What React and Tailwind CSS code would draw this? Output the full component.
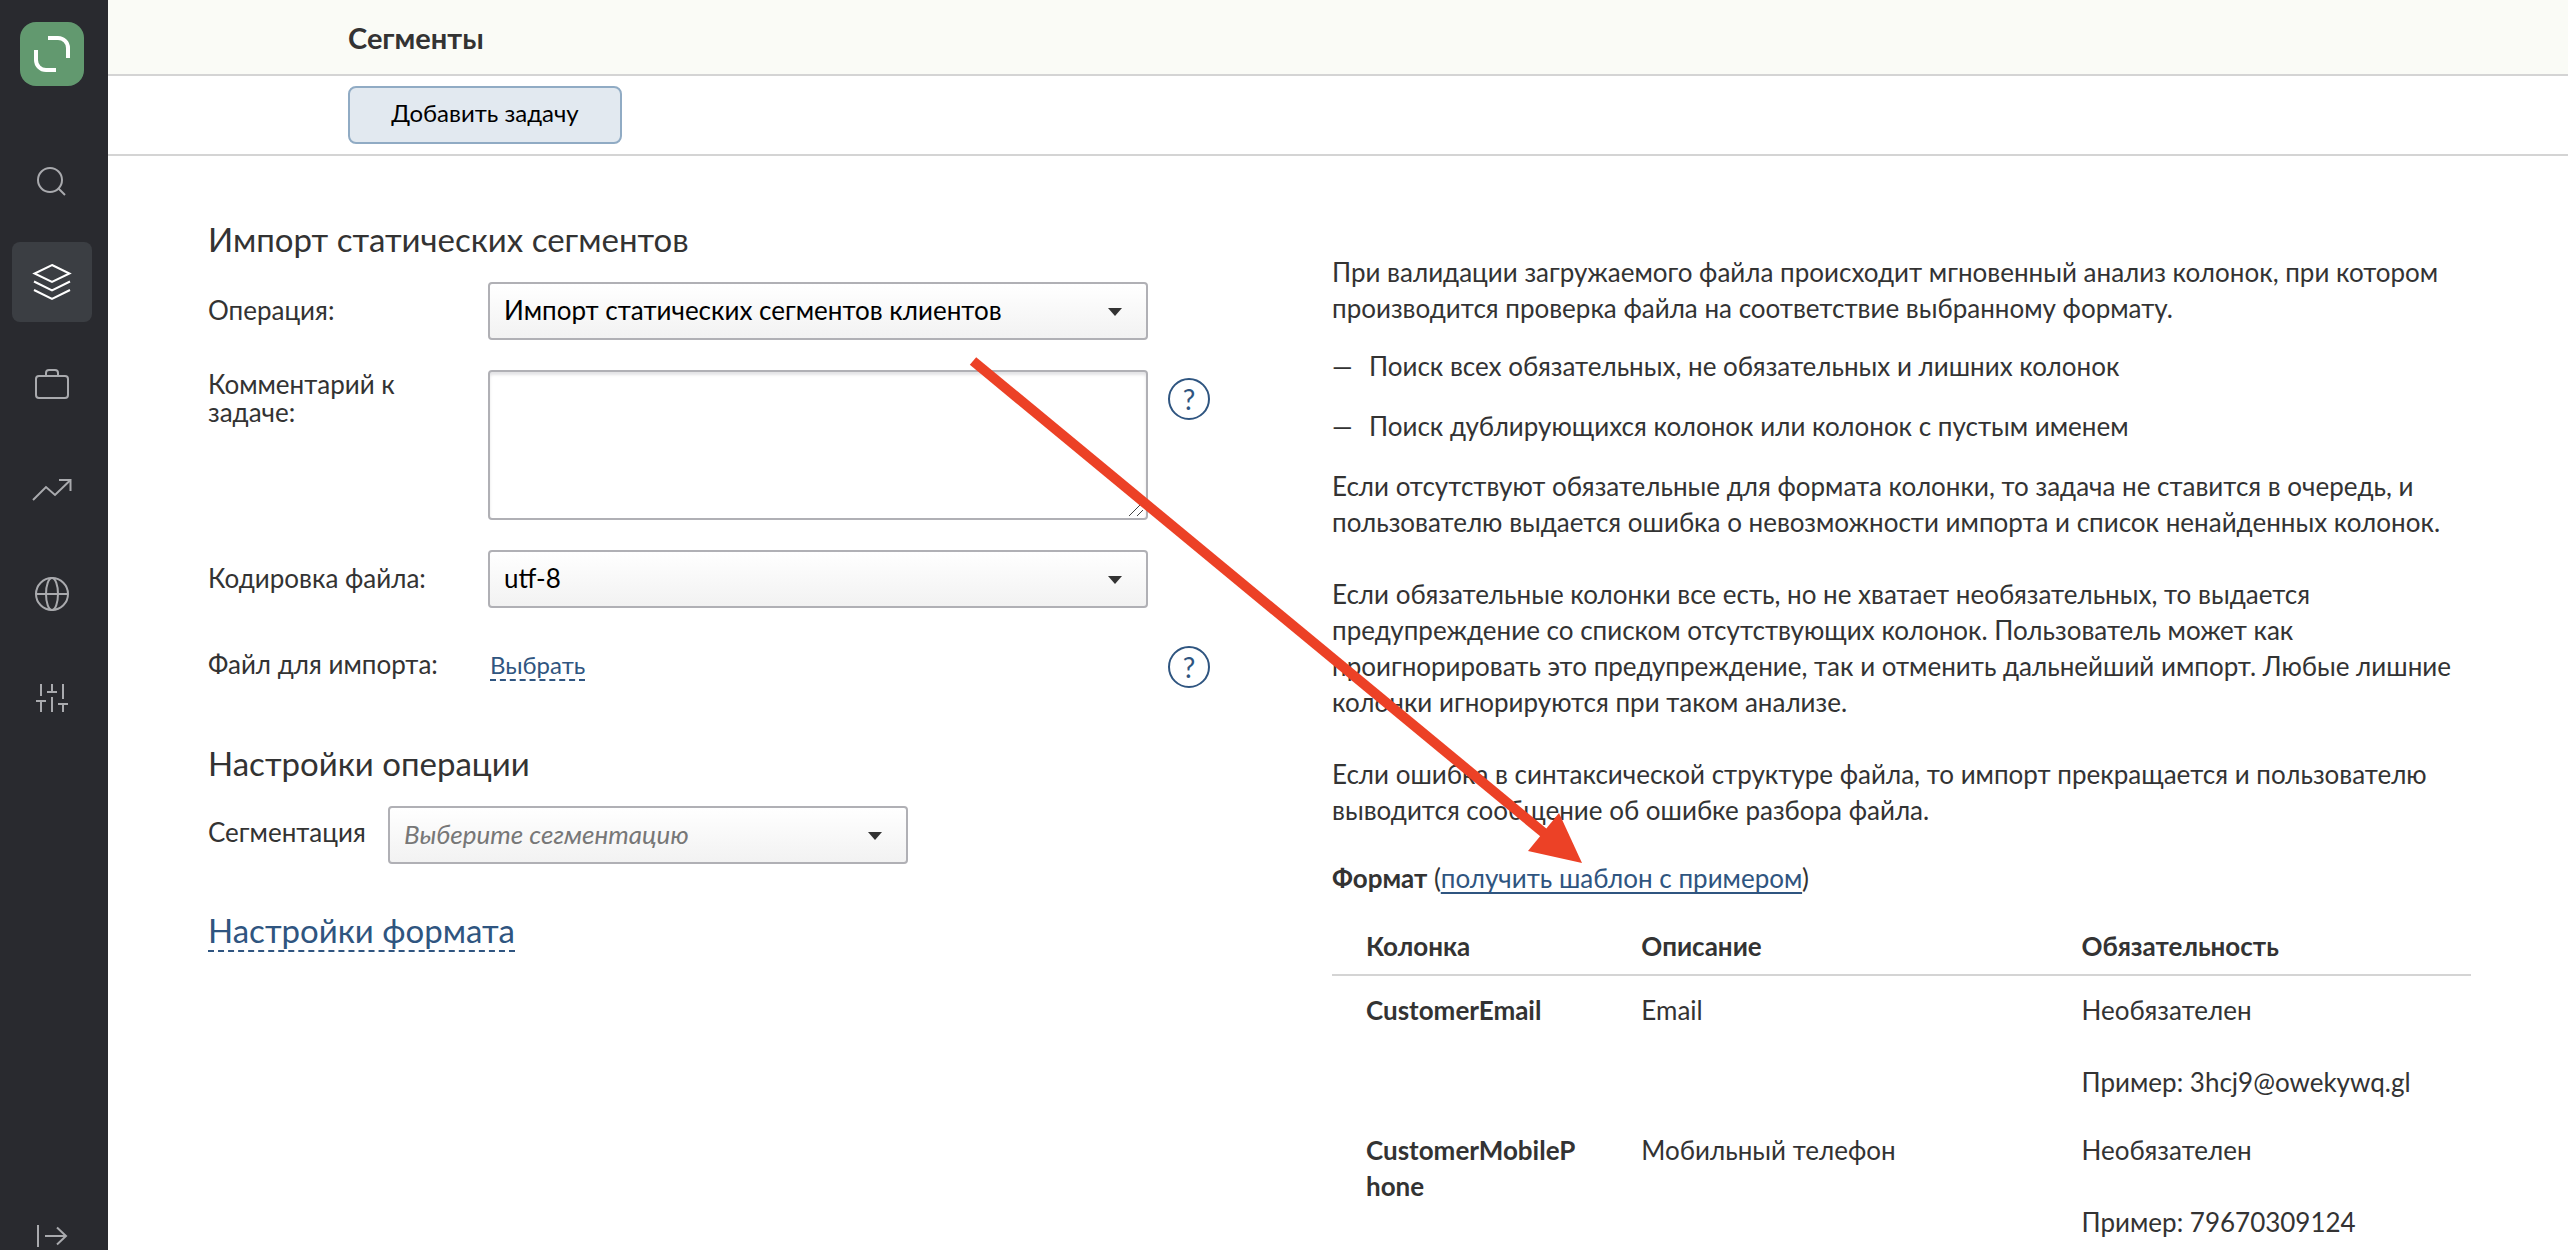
import React, { useState } from "react";

const navItems = [
    {
        name: "Поиск",
        icon: (
            <>
                <circle cx="18" cy="22" r="12" />
                <path d="M26.5 30.5L33 37" />
            </>
        ),
    },
    {
        name: "Сегменты",
        active: true,
        icon: (
            <>
                <path d="M20 3L37.5 11.5L20 20L2.5 11.5Z" />
                <path d="M2 19.5L20 28.5L38 19.5" />
                <path d="M2 28L20 37L38 28" />
            </>
        ),
    },
    {
        name: "Продукты",
        icon: (
            <>
                <rect x="4" y="10" width="32" height="22" rx="3" />
                <path d="M14 10V7a3 3 0 0 1 3-3h6a3 3 0 0 1 3 3v3" />
            </>
        ),
    },
    {
        name: "Отчеты",
        icon: (
            <>
                <path d="M1 30L14 17L23 25L38 10.5" />
                <path d="M27 10H38.5V21" />
            </>
        ),
    },
    {
        name: "Интеграции",
        icon: (
            <>
                <circle cx="20" cy="20" r="16" />
                <ellipse cx="20" cy="20" rx="6" ry="16" />
                <path d="M4 20H36" />
            </>
        ),
    },
    {
        name: "Настройки",
        icon: (
            <>
                <path d="M9 6V18M4 23H14M9 23V34" />
                <path d="M20 6V14M15 14H25M20 19V34" />
                <path d="M31 6V21M26 26H36M31 26V34" />
            </>
        ),
    },
];

const columns = [
    { name: "CustomerEmail", description: "Email", required: "Необязателен", example: "3hcj9@owekywq.gl" },
    { name: "CustomerMobilePhone", description: "Мобильный телефон", required: "Необязателен", example: "79670309124" },
];

const Sidebar = () => {
    return (
        <nav className="w-[108px] shrink-0 bg-[#292a2f] flex flex-col items-center pt-[22px] pr-1">
            <a href="#" aria-label="Главная" className="mb-[52px] block h-16 w-16 rounded-2xl bg-[#62996f]">
                <svg viewBox="0 0 64 64" className="h-16 w-16" fill="none" stroke="#fff" strokeWidth="4">
                    <path d="M28 16H38a10 10 0 0 1 10 10V36" />
                    <path d="M16 28V38a10 10 0 0 0 10 10H36" />
                </svg>
            </a>
            <div className="flex flex-col gap-6">
                {navItems.map((item) => (
                    <button
                        key={item.name}
                        aria-label={item.name}
                        className={
                            item.active
                                ? "flex h-20 w-20 items-center justify-center rounded-lg bg-[#3b3e43] text-white"
                                : "flex h-20 w-20 items-center justify-center rounded-lg text-[#a9aaae]"
                        }
                    >
                        <svg viewBox="0 0 40 40" className="h-10 w-10" fill="none" stroke="currentColor" strokeWidth="2">
                            {item.icon}
                        </svg>
                    </button>
                ))}
            </div>
            <button aria-label="Развернуть меню" className="mt-auto text-[#a9aaae]">
                <svg viewBox="0 0 40 28" className="h-7 w-10" fill="none" stroke="currentColor" strokeWidth="2">
                    <path d="M6 3V25M13 14H34M25 5.5L34 14L25 22.5" />
                </svg>
            </button>
        </nav>
    );
};

const Select = ({ id, value, onChange, className, children }) => {
    return (
        <div className="relative">
            <select
                id={id}
                value={value}
                onChange={onChange}
                className={`h-[58px] appearance-none rounded-sm border-2 border-[#b0b0b5] bg-linear-to-b from-white to-[#f2f2f2] pb-0.5 pl-3.5 pr-16 text-[26px] ${className}`}
            >
                {children}
            </select>
            <svg viewBox="0 0 14 8" className="pointer-events-none absolute top-[26px] right-[26px] h-2 w-3.5" fill="#333">
                <path d="M0 0H14L7 8Z" />
            </svg>
        </div>
    );
};

const Help = () => {
    return (
        <button
            type="button"
            aria-label="Справка"
            className="flex h-[42px] w-[42px] items-center justify-center rounded-full border-2 border-[#2f5580] text-[28px] leading-none text-[#2f5580]"
        >
            ?
        </button>
    );
};

const ImportForm = () => {
    const [operation, setOperation] = useState("static");
    const [comment, setComment] = useState("");
    const [encoding, setEncoding] = useState("utf-8");
    const [segmentation, setSegmentation] = useState("");

    return (
        <form className="pt-[63px] text-[26px] leading-7">
            <h2 className="text-[33px] leading-10">Импорт статических сегментов</h2>
            <div className="mt-[23px] flex">
                <label htmlFor="operation" className="w-[280px] pt-3.5">Операция:</label>
                <Select
                    id="operation"
                    value={operation}
                    onChange={(e) => setOperation(e.target.value)}
                    className="w-[660px] text-black"
                >
                    <option value="static">Импорт статических сегментов клиентов</option>
                </Select>
            </div>
            <div className="mt-[30px] flex">
                <label htmlFor="comment" className="w-[280px] pr-16">Комментарий к задаче:</label>
                <div className="relative mr-5">
                    <textarea
                        id="comment"
                        value={comment}
                        onChange={(e) => setComment(e.target.value)}
                        className="block h-[150px] w-[660px] resize-none rounded-sm border-2 border-[#b0b0b5] bg-white px-3.5 py-2 shadow-[inset_0_3px_3px_#e4e4e6]"
                    />
                    <svg viewBox="0 0 16 12" className="pointer-events-none absolute right-1 bottom-1 h-3 w-4" stroke="#444" strokeWidth="1">
                        <path d="M1 12L12 1M9 12L15 6" />
                    </svg>
                </div>
                <div className="pt-2">
                    <Help />
                </div>
            </div>
            <div className="mt-[30px] flex">
                <label htmlFor="encoding" className="w-[280px] pt-3.5">Кодировка файла:</label>
                <Select
                    id="encoding"
                    value={encoding}
                    onChange={(e) => setEncoding(e.target.value)}
                    className="w-[660px] text-black"
                >
                    <option value="utf-8">utf-8</option>
                </Select>
            </div>
            <div className="mt-[38px] flex">
                <span className="w-[280px] pt-1">Файл для импорта:</span>
                <div className="mr-5 w-[660px] pl-0.5 pt-1">
                    <button type="button" className="border-b-2 border-dashed border-[#2f5580] text-2xl leading-7 text-[#2f5580]">
                        Выбрать
                    </button>
                </div>
                <Help />
            </div>
            <h2 className="mt-[55px] text-[33px] leading-10">Настройки операции</h2>
            <div className="mt-[23px] flex">
                <label htmlFor="segmentation" className="w-[180px] pt-3">Сегментация</label>
                <Select
                    id="segmentation"
                    value={segmentation}
                    onChange={(e) => setSegmentation(e.target.value)}
                    className="w-[520px] text-[#777] italic"
                >
                    <option value="">Выберите сегментацию</option>
                </Select>
            </div>
            <button type="button" className="mt-[46px] border-b-2 border-dashed border-[#2f5580] text-[33px] leading-10 text-[#2f5580]">
                Настройки формата
            </button>
        </form>
    );
};

const FormatInfo = () => {
    return (
        <section className="pt-[98px] text-[26px] leading-9">
            <p>
                При валидации загружаемого файла происходит мгновенный анализ колонок, при котором
                производится проверка файла на соответствие выбранному формату.
            </p>
            <ul className="mt-[22px] mb-6 flex flex-col gap-6">
                <li className="flex">
                    <span className="w-[37px]">—</span>
                    Поиск всех обязательных, не обязательных и лишних колонок
                </li>
                <li className="flex">
                    <span className="w-[37px]">—</span>
                    Поиск дублирующихся колонок или колонок с пустым именем
                </li>
            </ul>
            <p className="mb-9">
                Если отсутствуют обязательные для формата колонки, то задача не ставится в очередь, и
                пользователю выдается ошибка о невозможности импорта и список ненайденных колонок.
            </p>
            <p className="mb-9">
                Если обязательные колонки все есть, но не хватает необязательных, то выдается
                предупреждение со списком отсутствующих колонок. Пользователь может как
                проигнорировать это предупреждение, так и отменить дальнейший импорт. Любые лишние
                колонки игнорируются при таком анализе.
            </p>
            <p className="mb-8">
                Если ошибка в синтаксической структуре файла, то импорт прекращается и пользователю
                выводится сообщение об ошибке разбора файла.
            </p>
            <p className="mb-8">
                <b>Формат</b> (
                <a href="#" className="text-[#2f5580] underline decoration-2 underline-offset-4">получить шаблон с примером</a>)
            </p>
            <table className="w-full table-fixed text-left align-top">
                <thead>
                    <tr className="border-b-2 border-[#d4d4d4]">
                        <th className="w-[24%] pb-2.5 pl-[34px] font-bold">Колонка</th>
                        <th className="w-[39%] pb-2.5 pl-9 font-bold">Описание</th>
                        <th className="w-[37%] pb-2.5 pl-8 font-bold">Обязательность</th>
                    </tr>
                </thead>
                <tbody>
                    {columns.map((col) => (
                        <tr key={col.name} className="align-top">
                            <td className="py-4 pl-[34px] pr-6 font-bold break-all">{col.name}</td>
                            <td className="py-4 pl-9">{col.description}</td>
                            <td className="py-4 pl-8">
                                <p className="mb-9">{col.required}</p>
                                <p>Пример: {col.example}</p>
                            </td>
                        </tr>
                    ))}
                </tbody>
            </table>
        </section>
    );
};

const App = () => {
    return (
        <div className="relative flex h-screen overflow-hidden bg-white font-['Lato','Noto_Sans',sans-serif] text-[#333]">
            <Sidebar />
            <div className="min-w-0 flex-1">
                <header className="flex h-[76px] items-center border-b-2 border-[#d4d4d4] bg-[#fafbf6] pt-0.5 pl-60">
                    <h1 className="text-[29px] leading-9 font-bold">Сегменты</h1>
                </header>
                <div className="flex h-20 items-center border-b-2 border-[#d4d4d4] pl-60">
                    <button className="h-[58px] w-[274px] rounded-lg border-2 border-[#90abc4] bg-[#e2e9f0] pb-1 text-2xl text-black">
                        Добавить задачу
                    </button>
                </div>
                <main className="grid grid-cols-[1124fr_1139fr] pr-[97px] pl-[100px]">
                    <ImportForm />
                    <FormatInfo />
                </main>
            </div>
            {/* pointer from the operation to the template link */}
            <svg viewBox="0 0 616 510" className="pointer-events-none absolute top-[355px] left-[968px] h-[510px] w-[616px]" fill="#ec4126">
                <path d="M5 6L576 478" stroke="#ec4126" strokeWidth="10" />
                <path d="M614 508L591 458L560 496Z" />
            </svg>
        </div>
    );
};

export default App;
